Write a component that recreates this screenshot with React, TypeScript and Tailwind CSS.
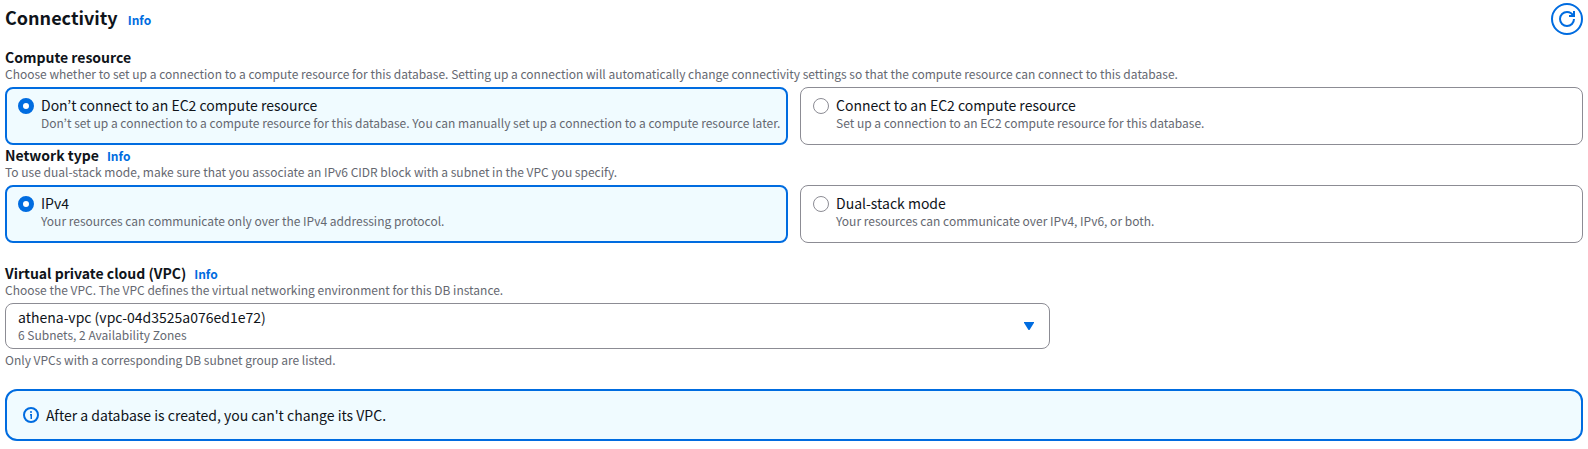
import { useState, type ReactNode } from "react";

type Choice = { value: string; title: string; description: string };

const computeChoices: Choice[] = [
  {
    value: "none",
    title: "Don’t connect to an EC2 compute resource",
    description:
      "Don’t set up a connection to a compute resource for this database. You can manually set up a connection to a compute resource later.",
  },
  {
    value: "ec2",
    title: "Connect to an EC2 compute resource",
    description: "Set up a connection to an EC2 compute resource for this database.",
  },
];

const networkChoices: Choice[] = [
  {
    value: "ipv4",
    title: "IPv4",
    description: "Your resources can communicate only over the IPv4 addressing protocol.",
  },
  {
    value: "dual",
    title: "Dual-stack mode",
    description: "Your resources can communicate over IPv4, IPv6, or both.",
  },
];

function InfoLink() {
  return (
    <a href="#info" className="text-xs font-bold text-[#006ce0] hover:underline">
      Info
    </a>
  );
}

function Hint({ id, children }: { id?: string; children: ReactNode }) {
  return (
    <p id={id} className="text-xs leading-4 text-[#656871]">
      {children}
    </p>
  );
}

function Tile({
  name,
  choice,
  checked,
  onSelect,
}: {
  name: string;
  choice: Choice;
  checked: boolean;
  onSelect: () => void;
}) {
  const id = `${name}-${choice.value}`;
  return (
    <label
      htmlFor={id}
      className={
        checked
          ? "flex cursor-pointer gap-[7px] rounded-lg border-2 border-[#006ce0] bg-[#f0fbff] pt-1.5 pr-[3px] pb-3 pl-[11px]"
          : "flex cursor-pointer gap-[7px] rounded-lg border border-[#8c8c94] bg-white pt-[7px] pr-1 pb-[13px] pl-3"
      }
    >
      <input
        id={id}
        type="radio"
        name={name}
        value={choice.value}
        checked={checked}
        onChange={onSelect}
        aria-describedby={`${id}-description`}
        className="mt-[3px] size-4 shrink-0 appearance-none rounded-full border border-[#8c8c94] bg-white checked:border-5 checked:border-[#006ce0]"
      />
      <span className="flex min-w-0 flex-col">
        <span className="text-sm leading-5 text-[#0f141a]">{choice.title}</span>
        <span id={`${id}-description`} className="text-xs leading-4 text-[#656871]">
          {choice.description}
        </span>
      </span>
    </label>
  );
}

function TileGroup({
  name,
  label,
  info,
  hint,
  choices,
}: {
  name: string;
  label: string;
  info?: boolean;
  hint: string;
  choices: Choice[];
}) {
  const [selected, setSelected] = useState(choices[0].value);
  return (
    <section role="radiogroup" aria-labelledby={`${name}-label`} aria-describedby={`${name}-hint`}>
      <div className="flex h-[19px] items-baseline gap-2">
        <h3 id={`${name}-label`} className="text-sm leading-5 font-bold">
          {label}
        </h3>
        {info && <InfoLink />}
      </div>
      <Hint id={`${name}-hint`}>{hint}</Hint>
      <div className="mt-[5px] grid grid-cols-2 gap-3">
        {choices.map((choice) => (
          <Tile
            key={choice.value}
            name={name}
            choice={choice}
            checked={selected === choice.value}
            onSelect={() => setSelected(choice.value)}
          />
        ))}
      </div>
    </section>
  );
}

export default function App() {
  return (
    <main className="bg-white px-[5px] pt-[3px] pb-2 font-['Noto_Sans_CJK_KR','Noto_Sans',sans-serif] text-[#0f141a]">
      <header className="flex items-start justify-between">
        <div className="flex items-baseline gap-2.5">
          <h2 className="text-lg leading-7 font-bold">Connectivity</h2>
          <InfoLink />
        </div>
        <button
          type="button"
          aria-label="Refresh"
          className="flex size-8 items-center justify-center rounded-full border-2 border-[#006ce0] text-[#006ce0]"
        >
          <svg viewBox="0 0 16 16" className="size-4" fill="none" stroke="currentColor" strokeWidth="2">
            <path d="M15 8c0 3.87-3.13 7-7 7s-7-3.13-7-7 3.13-7 7-7c2.79 0 5.2 1.63 6.33 4" />
            <path d="M10 5h5V0" />
          </svg>
        </button>
      </header>

      <div className="mt-3">
        <TileGroup
          name="compute"
          label="Compute resource"
          hint="Choose whether to set up a connection to a compute resource for this database. Setting up a connection will automatically change connectivity settings so that the compute resource can connect to this database."
          choices={computeChoices}
        />
        <TileGroup
          name="network"
          label="Network type"
          info
          hint="To use dual-stack mode, make sure that you associate an IPv6 CIDR block with a subnet in the VPC you specify."
          choices={networkChoices}
        />
      </div>

      <section className="mt-5 grid grid-cols-3 gap-x-5">
        <div className="col-span-2">
          <div className="flex h-[19px] items-baseline gap-2">
            <label htmlFor="vpc" className="text-sm leading-5 font-bold">
              Virtual private cloud (VPC)
            </label>
            <InfoLink />
          </div>
          <Hint>Choose the VPC. The VPC defines the virtual networking environment for this DB instance.</Hint>
          <div className="mt-[5px] grid items-center">
            <select
              id="vpc"
              aria-describedby="vpc-details vpc-hint"
              className="col-start-1 row-start-1 h-[46px] w-full appearance-none rounded-lg border border-[#8c8c94] bg-white px-3 pt-[3px] pb-[21px] text-sm leading-5"
            >
              <option>athena-vpc (vpc-04d3525a076ed1e72)</option>
            </select>
            <span
              id="vpc-details"
              className="pointer-events-none col-start-1 row-start-1 mb-1.5 self-end pl-[13px] text-xs leading-4 text-[#656871]"
            >
              6 Subnets, 2 Availability Zones
            </span>
            <svg
              viewBox="0 0 10 8"
              aria-hidden="true"
              className="pointer-events-none col-start-1 row-start-1 mr-4 h-2 w-2.5 justify-self-end fill-[#006ce0]"
            >
              <path d="M0 0h10v.8L5.5 8h-1L0 .8z" />
            </svg>
          </div>
          <div className="mt-[3px]">
            <Hint id="vpc-hint">Only VPCs with a corresponding DB subnet group are listed.</Hint>
          </div>
        </div>
      </section>

      <div
        role="note"
        className="mt-[21px] flex items-center gap-[7px] rounded-xl border-2 border-[#006ce0] bg-[#f0fbff] px-4 py-3.5"
      >
        <svg viewBox="0 0 16 16" aria-hidden="true" className="size-4 shrink-0 text-[#006ce0]" fill="none" stroke="currentColor">
          <circle cx="8" cy="8" r="7" strokeWidth="2" />
          <path d="M7 5h2M7 7.75h1.25V12" strokeWidth="1.5" />
        </svg>
        <p className="text-sm leading-5">After a database is created, you can't change its VPC.</p>
      </div>
    </main>
  );
}
